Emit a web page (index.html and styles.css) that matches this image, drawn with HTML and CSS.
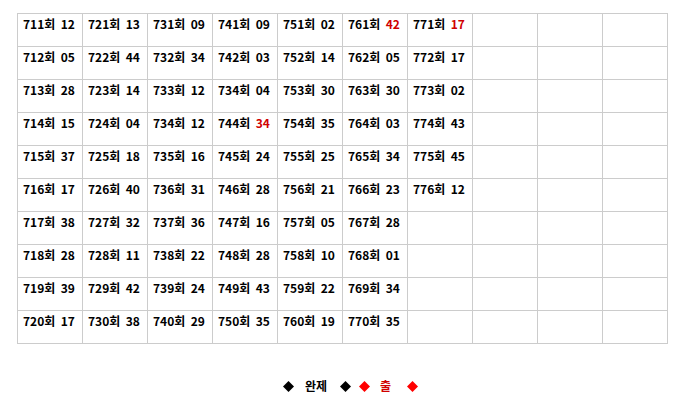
FILE: index.html
```html
<!DOCTYPE html>
<html lang="ko">
<head>
<meta charset="utf-8">
<title>회차</title>
<link rel="stylesheet" href="styles.css">
</head>
<body>
<div class="board">
  <div class="cell">711회 12</div><div class="cell">721회 13</div><div class="cell">731회 09</div><div class="cell">741회 09</div><div class="cell">751회 02</div><div class="cell">761회 <span class="hit">42</span></div><div class="cell">771회 <span class="hit">17</span></div><div class="cell"></div><div class="cell"></div><div class="cell"></div>
  <div class="cell">712회 05</div><div class="cell">722회 44</div><div class="cell">732회 34</div><div class="cell">742회 03</div><div class="cell">752회 14</div><div class="cell">762회 05</div><div class="cell">772회 17</div><div class="cell"></div><div class="cell"></div><div class="cell"></div>
  <div class="cell">713회 28</div><div class="cell">723회 14</div><div class="cell">733회 12</div><div class="cell">734회 04</div><div class="cell">753회 30</div><div class="cell">763회 30</div><div class="cell">773회 02</div><div class="cell"></div><div class="cell"></div><div class="cell"></div>
  <div class="cell">714회 15</div><div class="cell">724회 04</div><div class="cell">734회 12</div><div class="cell">744회 <span class="hit">34</span></div><div class="cell">754회 35</div><div class="cell">764회 03</div><div class="cell">774회 43</div><div class="cell"></div><div class="cell"></div><div class="cell"></div>
  <div class="cell">715회 37</div><div class="cell">725회 18</div><div class="cell">735회 16</div><div class="cell">745회 24</div><div class="cell">755회 25</div><div class="cell">765회 34</div><div class="cell">775회 45</div><div class="cell"></div><div class="cell"></div><div class="cell"></div>
  <div class="cell">716회 17</div><div class="cell">726회 40</div><div class="cell">736회 31</div><div class="cell">746회 28</div><div class="cell">756회 21</div><div class="cell">766회 23</div><div class="cell">776회 12</div><div class="cell"></div><div class="cell"></div><div class="cell"></div>
  <div class="cell">717회 38</div><div class="cell">727회 32</div><div class="cell">737회 36</div><div class="cell">747회 16</div><div class="cell">757회 05</div><div class="cell">767회 28</div><div class="cell"></div><div class="cell"></div><div class="cell"></div><div class="cell"></div>
  <div class="cell">718회 28</div><div class="cell">728회 11</div><div class="cell">738회 22</div><div class="cell">748회 28</div><div class="cell">758회 10</div><div class="cell">768회 01</div><div class="cell"></div><div class="cell"></div><div class="cell"></div><div class="cell"></div>
  <div class="cell">719회 39</div><div class="cell">729회 42</div><div class="cell">739회 24</div><div class="cell">749회 43</div><div class="cell">759회 22</div><div class="cell">769회 34</div><div class="cell"></div><div class="cell"></div><div class="cell"></div><div class="cell"></div>
  <div class="cell">720회 17</div><div class="cell">730회 38</div><div class="cell">740회 29</div><div class="cell">750회 35</div><div class="cell">760회 19</div><div class="cell">770회 35</div><div class="cell"></div><div class="cell"></div><div class="cell"></div><div class="cell"></div>
</div>
<div class="legend">
  <svg class="dia" width="11" height="11" viewBox="0 0 11 11"><polygon points="5.5,0 11,5.5 5.5,11 0,5.5" fill="#000"/></svg>
  <span class="label done">완제</span>
  <svg class="dia" width="11" height="11" viewBox="0 0 11 11"><polygon points="5.5,0 11,5.5 5.5,11 0,5.5" fill="#000"/></svg>
  <svg class="dia red-first" width="11" height="11" viewBox="0 0 11 11"><polygon points="5.5,0 11,5.5 5.5,11 0,5.5" fill="#ff0000"/></svg>
  <span class="label out">출</span>
  <svg class="dia" width="11" height="11" viewBox="0 0 11 11"><polygon points="5.5,0 11,5.5 5.5,11 0,5.5" fill="#ff0000"/></svg>
</div>
</body>
</html>
```

FILE: styles.css
```css
html, body {
  margin: 0;
  padding: 0;
  background: #fff;
}
body {
  padding: 13px 0 0 17px;
  font-family: "Noto Sans CJK KR", "Noto Sans", sans-serif;
  font-size: 12px;
  font-weight: 700;
  color: #000;
}
.board {
  box-sizing: border-box;
  display: grid;
  grid-template-columns: repeat(10, 65px);
  grid-auto-rows: 33px;
  width: 651px;
  border-left: 1px solid #cccccc;
  border-top: 1px solid #cccccc;
}
.cell {
  box-sizing: border-box;
  border-right: 1px solid #cccccc;
  border-bottom: 1px solid #cccccc;
  padding: 2px 0 0 5px;
  line-height: 16px;
  white-space: nowrap;
  word-spacing: 2px;
}
.hit {
  color: #d00000;
}
.legend {
  display: flex;
  align-items: center;
  margin: 34px 0 0 266px;
  height: 16px;
  line-height: 16px;
}
.dia {
  display: block;
  flex: none;
}
.label {
  margin: 0 13px 0 11px;
}
.out {
  color: #d00000;
  margin: 0 16px 0 10px;
}
.red-first {
  margin-left: 8px;
}
```
